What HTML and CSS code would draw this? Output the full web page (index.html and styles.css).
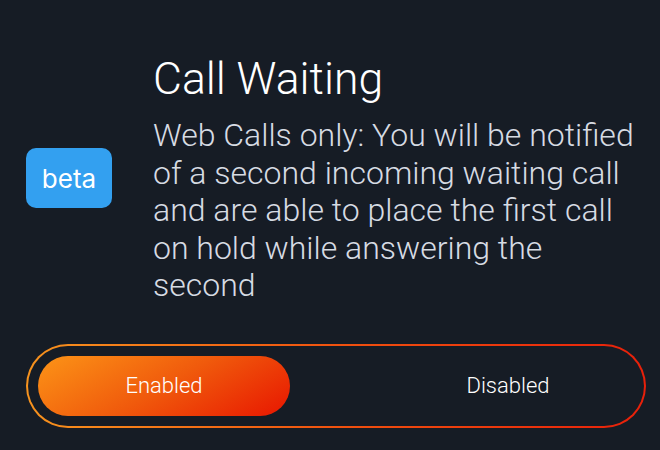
FILE: index.html
```html
<!DOCTYPE html>
<html lang="en">
<head>
  <meta charset="UTF-8">
  <title>Call Waiting</title>
  <link rel="stylesheet" href="styles.css">
</head>
<body>
  <div class="setting">
    <div class="setting-row">
      <span class="badge">beta</span>
      <div class="setting-text">
        <div class="setting-title">Call Waiting</div>
        <div class="setting-desc">Web Calls only: You will be notified<br>of a second incoming waiting call<br>and are able to place the first call<br>on hold while answering the<br>second</div>
      </div>
    </div>
    <div class="toggle">
      <div class="toggle-inner">
        <button class="toggle-opt active">Enabled</button>
        <button class="toggle-opt">Disabled</button>
      </div>
    </div>
  </div>
</body>
</html>
```

FILE: styles.css
```css
html, body {
  margin: 0;
  padding: 0;
  background: #161c25;
  height: 100%;
}
body {
  font-family: 'Roboto', 'Inter', sans-serif;
  color: #fff;
  overflow: hidden;
}
.setting {
  padding: 54px 14px 0 26px;
}
.setting-row {
  display: flex;
  align-items: flex-start;
}
.badge {
  flex: none;
  width: 86px;
  height: 60px;
  margin-top: 94px;
  margin-right: 41px;
  border-radius: 10px;
  background: #33a0f0;
  color: #fff;
  font-family: 'Inter', sans-serif;
  font-size: 26px;
  display: flex;
  align-items: center;
  justify-content: center;
}
.setting-text {
  flex: 1;
}
.setting-title {
  font-size: 44.5px;
  font-weight: 300;
  line-height: 50px;
  color: #fff;
}
.setting-desc {
  margin-top: 13px;
  font-size: 32px;
  font-weight: 300;
  line-height: 37.5px;
  color: #d6dbe3;
  white-space: nowrap;
}
.toggle {
  margin-top: 39px;
  padding: 2px;
  border-radius: 42px;
  background: linear-gradient(90deg, #f7931e, #f0520f 50%, #e8200a);
  width: 616px;
}
.toggle-inner {
  background: #161c25;
  border-radius: 40px;
  padding: 10px;
  display: flex;
  justify-content: space-between;
}
.toggle-opt {
  width: 252px;
  height: 60px;
  border: none;
  border-radius: 30px;
  background: none;
  color: #fff;
  font-family: inherit;
  font-size: 22px;
  font-weight: 300;
  padding: 0;
}
.toggle-opt.active {
  background: linear-gradient(150deg, #fc9417, #f05a0c 50%, #e81600);
}
```
